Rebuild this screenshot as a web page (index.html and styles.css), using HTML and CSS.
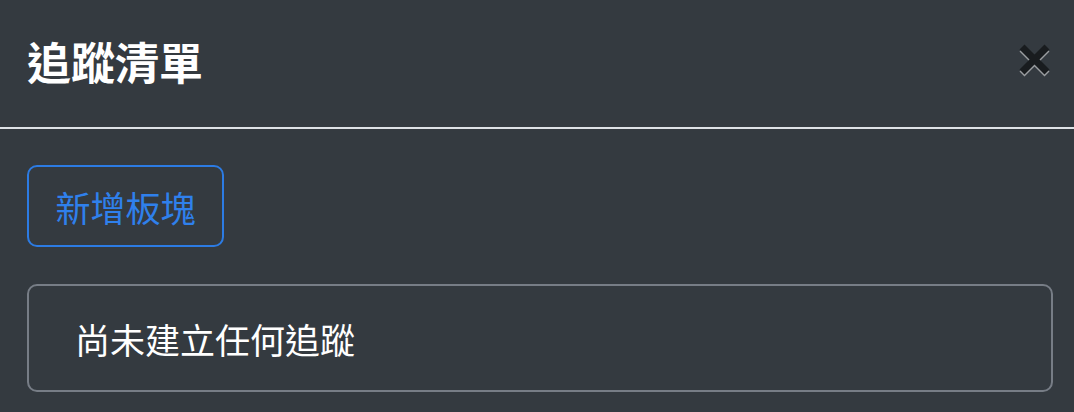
FILE: index.html
```html
<!DOCTYPE html>
<html lang="zh-Hant">
<head>
<meta charset="utf-8">
<title>追蹤清單</title>
<link rel="stylesheet" href="styles.css">
</head>
<body>
<div class="modal">
  <div class="modal-header">
    <h5 class="modal-title">追蹤清單</h5>
    <button class="close" type="button" aria-label="Close">
      <svg width="34" height="34" viewBox="0 0 34 34" aria-hidden="true">
        <g opacity="0.5">
          <g transform="translate(0 2)" stroke="#ffffff" stroke-width="7">
            <line x1="4" y1="4" x2="29" y2="29"/>
            <line x1="29" y1="4" x2="4" y2="29"/>
          </g>
          <g stroke="#000000" stroke-width="7">
            <line x1="4" y1="4" x2="29" y2="29"/>
            <line x1="29" y1="4" x2="4" y2="29"/>
          </g>
        </g>
      </svg>
    </button>
  </div>
  <div class="modal-body">
    <button class="btn-outline" type="button">新增板塊</button>
    <div class="empty-item">尚未建立任何追蹤</div>
  </div>
</div>
</body>
</html>
```
FILE: styles.css
```css
html, body {
  margin: 0;
  padding: 0;
  background: #343a40;
}
body {
  width: 1074px;
  height: 412px;
  overflow: hidden;
  font-family: "Noto Sans CJK TC", "Noto Sans", sans-serif;
  color: #ffffff;
}
.modal-header {
  height: 129px;
  box-sizing: border-box;
  display: flex;
  align-items: center;
  justify-content: space-between;
  padding: 0 22px 0 27px;
  border-bottom: 2px solid #dee2e6;
}
.modal-title {
  margin: -5px 0 0 0;
  font-size: 44px;
  font-weight: 700;
  line-height: 1;
  color: #ffffff;
}
.close {
  background: none;
  border: none;
  padding: 0;
  margin: -8px 0 0 0;
  width: 34px;
  height: 34px;
  display: block;
  cursor: pointer;
}
.close svg {
  display: block;
}
.modal-body {
  padding: 36px 21px 0 27px;
  display: flex;
  flex-direction: column;
  align-items: flex-start;
  gap: 37px;
}
.btn-outline {
  box-sizing: border-box;
  width: 197px;
  height: 82px;
  border: 2px solid #2c7be3;
  border-radius: 10px;
  background: transparent;
  color: #2f80ec;
  font-family: "Noto Sans CJK TC", "Noto Sans", sans-serif;
  font-size: 35px;
  line-height: 1;
  padding: 0;
  display: flex;
  align-items: center;
  justify-content: center;
}
.empty-item {
  box-sizing: border-box;
  align-self: stretch;
  height: 108px;
  border: 2px solid #777d86;
  border-radius: 10px;
  padding: 0 46px;
  display: flex;
  align-items: center;
  font-size: 35px;
  line-height: 1;
  color: #ffffff;
}
```
